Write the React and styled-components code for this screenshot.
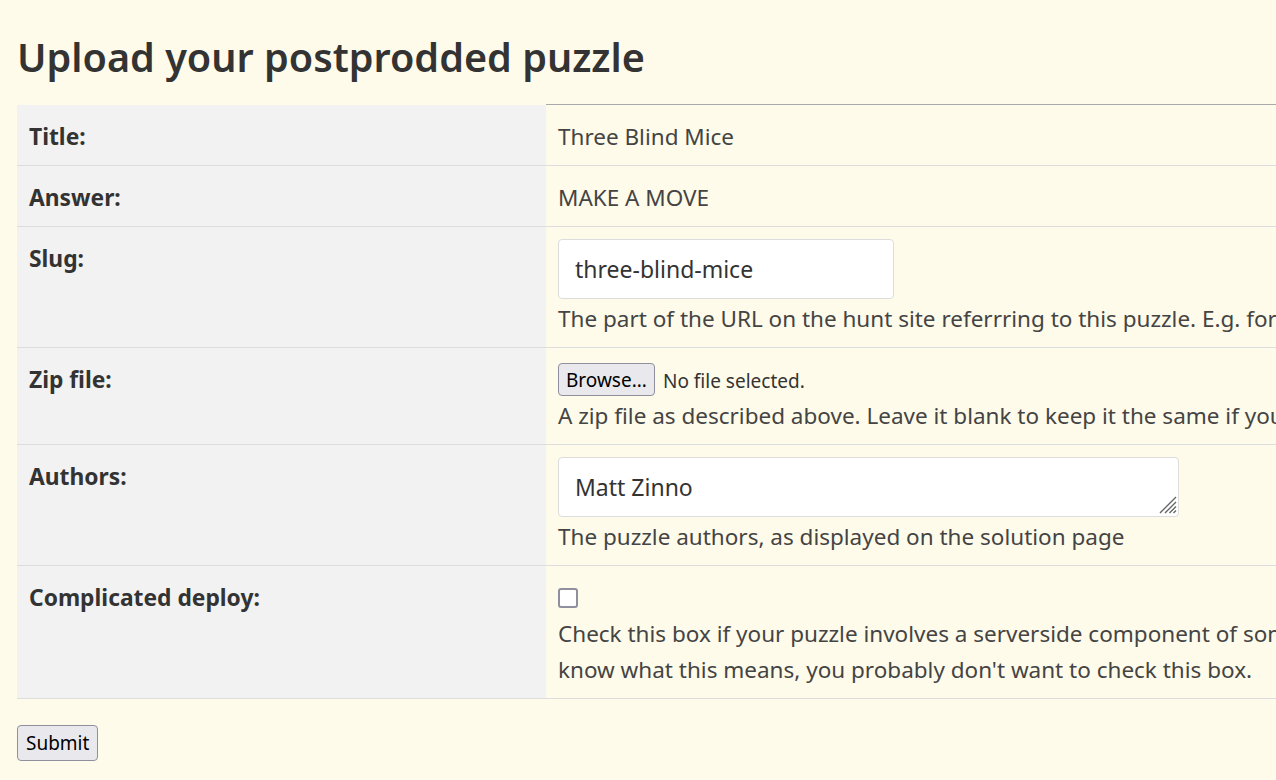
import React from "react";
import styled, { createGlobalStyle } from "styled-components";

const GlobalStyle = createGlobalStyle`
  html, body {
    margin: 0;
    background: #fffbea;
    overflow: hidden;
  }
  body {
    font-family: "Noto Sans", "Open Sans", sans-serif;
    color: #333;
  }
`;

const Page = styled.div`
  padding: 0 17px;
  width: 1700px;
`;

const Heading = styled.h1`
  margin: 0;
  padding: 30px 0 20px 0;
  font-size: 39.6px;
  line-height: 54px;
  font-weight: 600;
  color: #333;
`;

const Grid = styled.div`
  display: grid;
  grid-template-columns: 529px 1171px;
`;

const Label = styled.div`
  background: #f2f2f2;
  background-clip: padding-box;
  padding: 14px 12px 10px;
  font-size: 22.8px;
  line-height: 36px;
  font-weight: 700;
  color: #333;
  border-bottom: 1px solid #ddd;
  border-top: ${(p) => (p.$first ? "1px solid transparent" : "0")};
`;

const Value = styled.div`
  padding: ${(p) => (p.$plain ? "14px 12px 10px" : "12px 12px 10px")};
  font-size: 22.5px;
  line-height: 36px;
  color: #444;
  border-bottom: 1px solid #ddd;
  border-top: ${(p) => (p.$first ? "1px solid #aaa" : "0")};
  white-space: nowrap;
`;

const TextInput = styled.input`
  display: block;
  box-sizing: border-box;
  width: ${(p) => p.$width}px;
  height: 60px;
  padding: 0 16px;
  border: 1px solid #ddd;
  border-radius: 4px;
  background: #fff;
  font-family: inherit;
  font-size: 23px;
  color: #333;
  outline: none;
`;

const AreaWrap = styled.div`
  position: relative;
  width: 621px;
`;

const TextArea = styled.textarea`
  display: block;
  box-sizing: border-box;
  width: 100%;
  height: 60px;
  padding: 12px 16px;
  border: 1px solid #ddd;
  border-radius: 4px;
  background: #fff;
  font-family: inherit;
  font-size: 23px;
  line-height: 34px;
  color: #333;
  outline: none;
  resize: none;
  overflow: hidden;
`;

const Grip = styled.svg`
  position: absolute;
  right: 2px;
  bottom: 3px;
`;

const FileRow = styled.div`
  display: flex;
  align-items: flex-start;
  gap: 8px;
  height: 36px;
`;

const NativeButton = styled.button`
  box-sizing: border-box;
  height: ${(p) => p.$h}px;
  margin-top: ${(p) => p.$top || 0}px;
  padding: 0 ${(p) => p.$pad}px;
  background: #e9e9ed;
  border: 1px solid #8f8f9d;
  border-radius: 4px;
  font-family: "Noto Sans", sans-serif;
  font-size: ${(p) => p.$size}px;
  color: #000;
  cursor: pointer;
`;

const FileStatus = styled.span`
  padding-top: 3px;
  font-size: 19px;
  line-height: 36px;
  color: #333;
`;

const CheckRow = styled.div`
  display: flex;
  align-items: flex-start;
  height: 36px;
  padding-top: 10px;
  box-sizing: border-box;
`;

const Check = styled.input`
  appearance: none;
  margin: 0;
  width: 20px;
  height: 20px;
  border: 2px solid #8f8f9d;
  border-radius: 3px;
  background: #fff;
`;

const Help = styled.div`
  padding-top: 2px;
  color: #444;
`;

const Footer = styled.div`
  padding-top: 26px;
`;

export default function App() {
  return (
    <>
      <GlobalStyle />
      <Page>
        <Heading>Upload your postprodded puzzle</Heading>
        <Grid>
          <Label $first>Title:</Label>
          <Value $first $plain>Three Blind Mice</Value>

          <Label>Answer:</Label>
          <Value $plain>MAKE A MOVE</Value>

          <Label>Slug:</Label>
          <Value>
            <TextInput $width={336} defaultValue="three-blind-mice" />
            <Help>
              The part of the URL on the hunt site referrring to this puzzle. E.g. for a puzzle called "Three Blind Mice", this would be three-blind-mice.
            </Help>
          </Value>

          <Label>Zip file:</Label>
          <Value>
            <FileRow>
              <NativeButton $h={33} $size={19} $pad={7} $top={3}>Browse...</NativeButton>
              <FileStatus>No file selected.</FileStatus>
            </FileRow>
            <Help>
              A zip file as described above. Leave it blank to keep it the same if you already uploaded one.
            </Help>
          </Value>

          <Label>Authors:</Label>
          <Value>
            <AreaWrap>
              <TextArea defaultValue="Matt Zinno" />
              <Grip width="20" height="20" viewBox="0 0 20 20">
                <path d="M19 3 L3 19 M19 8 L8 19 M19 12.5 L12.5 19 M19 16.5 L16.5 19" stroke="#666" strokeWidth="1.4" />
              </Grip>
            </AreaWrap>
            <Help>The puzzle authors, as displayed on the solution page</Help>
          </Value>

          <Label>Complicated deploy:</Label>
          <Value>
            <CheckRow>
              <Check type="checkbox" />
            </CheckRow>
            <Help>
              Check this box if your puzzle involves a serverside component of some sort. If you don't
              <br />
              know what this means, you probably don't want to check this box.
            </Help>
          </Value>
        </Grid>
        <Footer>
          <NativeButton $h={36} $size={19} $pad={8}>Submit</NativeButton>
        </Footer>
      </Page>
    </>
  );
}
